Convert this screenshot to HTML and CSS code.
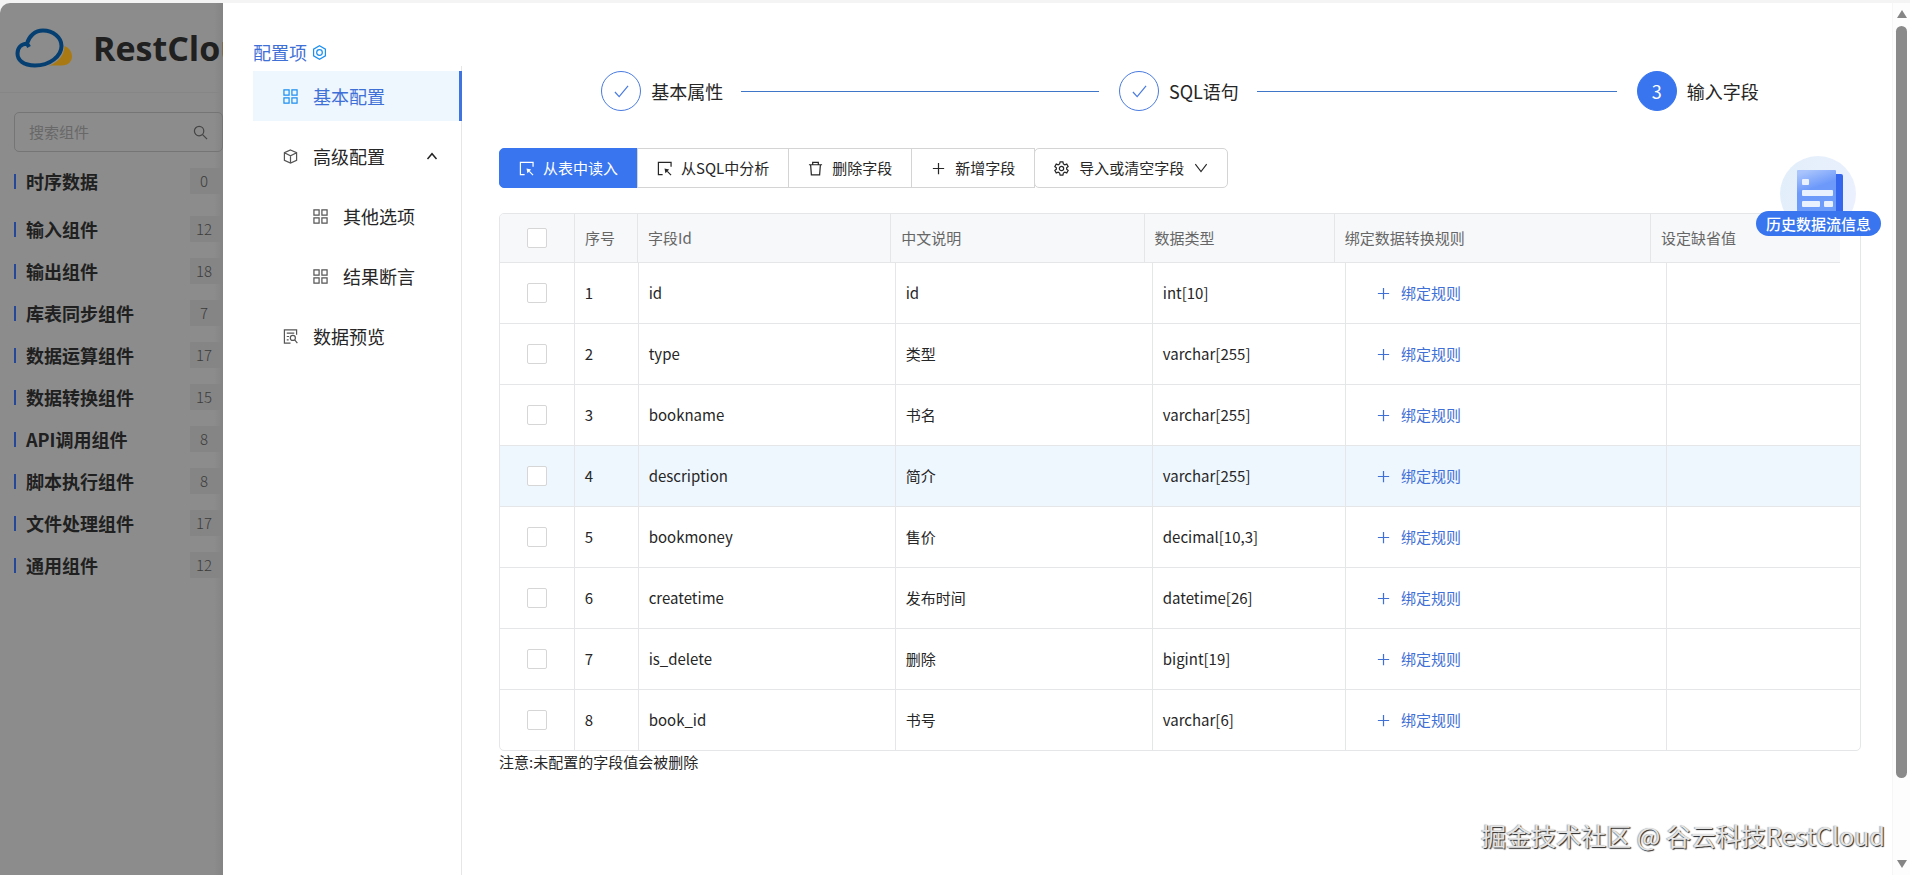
FILE: index.html
```
<!DOCTYPE html>
<html lang="zh-CN">
<head>
    <meta charset="UTF-8">
    <meta name="viewport" content="width=device-width, initial-scale=1.0">
    <title>RestCloud - 输入字段</title>
    <link rel="stylesheet" href="styles.css">
</head>
<body>

<!-- shared icons -->
<svg class="sprite" aria-hidden="true">
    <symbol id="i-grid" viewBox="0 0 16 16"><path d="M1 1h5.500v5.500H1zM9.500 1H15v5.500H9.500zM1 9.500h5.500V15H1zM9.500 9.500H15V15H9.500z"/></symbol>
    <symbol id="i-box" viewBox="0 0 16 16"><path d="M8 1l6.500 3v8L8 15l-6.500-3V4zM1.500 4L8 7.200 14.500 4M8 7.200V15"/></symbol>
    <symbol id="i-preview" viewBox="0 0 16 16"><path d="M14.500 6V1h-13v14H8M4 4.500h8M4 8h2.500M4 11.500h2"/><circle cx="10.500" cy="9.500" r="2.700"/><path d="M12.500 11.700L15.300 15"/></symbol>
    <symbol id="i-select" viewBox="0 0 16 16"><path d="M15 6V1.500H1.500v13H6M15 15l-4-4"/><path class="solid" d="M8 8l5 1-4 4z"/></symbol>
    <symbol id="i-trash" viewBox="0 0 16 16"><path d="M1 4h14M5 4V1.500h6V4M2.800 4l.8 10.800h8.800L13.200 4"/></symbol>
    <symbol id="i-plus" viewBox="0 0 16 16"><path d="M8 2v12M2 8h12"/></symbol>
    <symbol id="i-gear" viewBox="0 0 16 16"><path d="M6.500 1h3l.5 2.100 1.500.9 2.100-.7 1.500 2.600-1.600 1.400v1.400l1.600 1.400-1.500 2.600-2.100-.7-1.500.9-.5 2.100h-3L6 12.900 4.500 12l-2.100.7-1.500-2.600 1.600-1.400V7.300L.9 5.900l1.500-2.600 2.100.7L6 3.100z"/><circle cx="8" cy="8" r="2.300"/></symbol>
    <symbol id="i-check" viewBox="0 0 16 16"><path d="M1 8.500L5.500 13.500 15 2"/></symbol>
    <symbol id="i-down" viewBox="0 0 16 16"><path d="M1.500 3.500L8 12l6.500-8.500"/></symbol>
    <symbol id="i-up" viewBox="0 0 16 16"><path d="M2 12l6-7 6 7"/></symbol>
    <symbol id="i-search" viewBox="0 0 16 16"><circle cx="6.500" cy="6.500" r="5"/><path d="M10.200 10.200L15 15"/></symbol>
    <symbol id="i-nut" viewBox="0 0 16 16"><path d="M8 .8l6.300 3.600v7.200L8 15.200l-6.300-3.600V4.400z"/><circle cx="8" cy="8" r="3"/></symbol>
</svg>

<div class="app">
    <aside class="sidebar">
        <div class="brand">
            <svg class="logo" viewBox="0 0 58 40" aria-hidden="true">
                <path d="M34 37.500c6-3 11-9 13-20 6 1 10 5 10 11 0 5-4 9-10 9z" fill="#a97a14"/>
                <path d="M15 36C7 36 2 31 2 25.500 2 20 6 16 12 15.500 14 8 20 2.500 28 2.500c10 0 18.500 7 18.500 15.500C46.500 28 37 36 25 36z" fill="#8c8c8c" stroke="#8c8c8c" stroke-width="6"/>
                <path d="M14 19c-1-2-2-3-2-3.500C14 8 20 2.500 28 2.500c10 0 18.500 7 18.500 15.500C46.500 28 35 37.500 20 37.500 8 37.500 2.500 32 2.500 25.500 2.500 20 6 16 12 15.500" fill="none" stroke="#053f72" stroke-width="4"/>
            </svg>
            <span>RestCloud</span>
        </div>
        <div class="search">
            <input type="text" placeholder="搜索组件" aria-label="搜索组件">
            <svg class="icon"><use href="#i-search"/></svg>
        </div>
        <ul class="groups">
            <li><span>时序数据</span><em>0</em></li>
            <li><span>输入组件</span><em>12</em></li>
            <li><span>输出组件</span><em>18</em></li>
            <li><span>库表同步组件</span><em>7</em></li>
            <li><span>数据运算组件</span><em>17</em></li>
            <li><span>数据转换组件</span><em>15</em></li>
            <li><span>API调用组件</span><em>8</em></li>
            <li><span>脚本执行组件</span><em>8</em></li>
            <li><span>文件处理组件</span><em>17</em></li>
            <li><span>通用组件</span><em>12</em></li>
        </ul>
    </aside>

    <div class="drawer">
        <nav class="menu">
            <div class="menu-title">配置项 <svg class="icon"><use href="#i-nut"/></svg></div>
            <div class="menu-list">
                <a class="item active" href="#"><svg class="icon"><use href="#i-grid"/></svg>基本配置</a>
                <a class="item" href="#"><svg class="icon"><use href="#i-box"/></svg>高级配置<svg class="icon arrow"><use href="#i-up"/></svg></a>
                <a class="item sub" href="#"><svg class="icon"><use href="#i-grid"/></svg>其他选项</a>
                <a class="item sub" href="#"><svg class="icon"><use href="#i-grid"/></svg>结果断言</a>
                <a class="item" href="#"><svg class="icon"><use href="#i-preview"/></svg>数据预览</a>
            </div>
        </nav>

        <main class="content">
            <ol class="steps">
                <li class="step"><span class="dot"><svg class="icon"><use href="#i-check"/></svg></span><span>基本属性</span></li>
                <li class="step"><span class="dot"><svg class="icon"><use href="#i-check"/></svg></span><span>SQL语句</span></li>
                <li class="step current"><span class="dot">3</span><span>输入字段</span></li>
            </ol>

            <div class="toolbar">
                <button class="btn primary"><svg class="icon"><use href="#i-select"/></svg>从表中读入</button>
                <button class="btn"><svg class="icon"><use href="#i-select"/></svg>从SQL中分析</button>
                <button class="btn"><svg class="icon"><use href="#i-trash"/></svg>删除字段</button>
                <button class="btn"><svg class="icon"><use href="#i-plus"/></svg>新增字段</button>
                <button class="btn dropdown"><svg class="icon"><use href="#i-gear"/></svg>导入或清空字段<svg class="icon small"><use href="#i-down"/></svg></button>
            </div>

            <div class="grid">
                <table class="head">
                    <colgroup><col class="c-check"><col class="c-no"><col class="c-id"><col class="c-name"><col class="c-type"><col class="c-rule"><col></colgroup>
                    <thead>
                        <tr>
                            <th><input type="checkbox" aria-label="全选"></th>
                            <th>序号</th>
                            <th>字段Id</th>
                            <th>中文说明</th>
                            <th>数据类型</th>
                            <th>绑定数据转换规则</th>
                            <th>设定缺省值</th>
                        </tr>
                    </thead>
                </table>
                <table class="body">
                    <colgroup><col class="c-check"><col class="c-no"><col class="c-id"><col class="c-name"><col class="c-type"><col class="c-rule"><col></colgroup>
                    <tbody>
                        <tr><td><input type="checkbox" aria-label="id"></td><td>1</td><td>id</td><td>id</td><td>int[10]</td><td><button class="link"><svg class="icon"><use href="#i-plus"/></svg>绑定规则</button></td><td></td></tr>
                        <tr><td><input type="checkbox" aria-label="type"></td><td>2</td><td>type</td><td>类型</td><td>varchar[255]</td><td><button class="link"><svg class="icon"><use href="#i-plus"/></svg>绑定规则</button></td><td></td></tr>
                        <tr><td><input type="checkbox" aria-label="bookname"></td><td>3</td><td>bookname</td><td>书名</td><td>varchar[255]</td><td><button class="link"><svg class="icon"><use href="#i-plus"/></svg>绑定规则</button></td><td></td></tr>
                        <tr class="hover"><td><input type="checkbox" aria-label="description"></td><td>4</td><td>description</td><td>简介</td><td>varchar[255]</td><td><button class="link"><svg class="icon"><use href="#i-plus"/></svg>绑定规则</button></td><td></td></tr>
                        <tr><td><input type="checkbox" aria-label="bookmoney"></td><td>5</td><td>bookmoney</td><td>售价</td><td>decimal[10,3]</td><td><button class="link"><svg class="icon"><use href="#i-plus"/></svg>绑定规则</button></td><td></td></tr>
                        <tr><td><input type="checkbox" aria-label="createtime"></td><td>6</td><td>createtime</td><td>发布时间</td><td>datetime[26]</td><td><button class="link"><svg class="icon"><use href="#i-plus"/></svg>绑定规则</button></td><td></td></tr>
                        <tr><td><input type="checkbox" aria-label="is_delete"></td><td>7</td><td>is_delete</td><td>删除</td><td>bigint[19]</td><td><button class="link"><svg class="icon"><use href="#i-plus"/></svg>绑定规则</button></td><td></td></tr>
                        <tr><td><input type="checkbox" aria-label="book_id"></td><td>8</td><td>book_id</td><td>书号</td><td>varchar[6]</td><td><button class="link"><svg class="icon"><use href="#i-plus"/></svg>绑定规则</button></td><td></td></tr>
                    </tbody>
                </table>
            </div>
            <p class="note">注意:未配置的字段值会被删除</p>
        </main>

        <div class="scrollbar" aria-hidden="true">
            <svg viewBox="0 0 10 8"><path d="M5 0l5 8H0z"/></svg>
            <div class="track"><div class="thumb"></div></div>
            <svg viewBox="0 0 10 8"><path d="M0 0h10L5 8z"/></svg>
        </div>
    </div>
</div>

<button class="history">
    <svg viewBox="0 0 76 60" aria-hidden="true">
        <defs>
            <linearGradient id="halo" x1="0" y1="0" x2="1" y2="0.300"><stop offset="0" stop-color="#e2eefb"/><stop offset="1" stop-color="#eaf0fd"/></linearGradient>
            <linearGradient id="page" x1="0.300" y1="0" x2="0.600" y2="1"><stop offset="0" stop-color="#a9c4fc"/><stop offset="0.400" stop-color="#6c99fa"/><stop offset="1" stop-color="#6f9efa"/></linearGradient>
        </defs>
        <circle cx="38" cy="38" r="38" fill="url(#halo)"/>
        <rect x="50" y="18" width="13" height="42" rx="2" fill="#3467ee"/>
        <rect x="17" y="14" width="39" height="46" rx="1" fill="url(#page)"/>
        <g fill="#e9f1ff">
            <rect x="22" y="23" width="7" height="6" rx="1"/>
            <rect x="22" y="34" width="31" height="6" rx="1"/>
            <rect x="22" y="45" width="18" height="6" rx="1"/>
            <rect x="44" y="45" width="9" height="6" rx="1"/>
        </g>
    </svg>
    <span>历史数据流信息</span>
</button>

<div class="watermark">掘金技术社区 @ 谷云科技RestCloud</div>

</body>
</html>
```
FILE: styles.css
```
* {
    box-sizing: border-box;
}
body {
    margin: 0;
    height: 100vh;
    padding-top: 3px;
    overflow: hidden;
    background: #f4f4f4;
    color: #262626;
    font-family: "Noto Sans CJK SC", sans-serif;
    font-size: 15px;
    line-height: 22px;
}
button, input {
    font: inherit;
    color: inherit;
}
ul, ol {
    list-style: none;
    margin: 0;
    padding: 0;
}
a {
    color: inherit;
    text-decoration: none;
}
.sprite {
    display: none;
}
.icon {
    width: 15px;
    height: 15px;
    flex: none;
    fill: none;
    stroke: currentColor;
    stroke-width: 1.3;
}
.icon.small {
    width: 14px;
    height: 14px;
}
.solid {
    fill: currentColor;
    stroke: none;
}
.app {
    display: flex;
    height: 100%;
}

/* masked page behind the drawer */
.sidebar {
    width: 223px;
    flex: none;
    overflow: hidden;
    border-radius: 10px 0 0 0;
    background: linear-gradient(to right, #8c8c8c 96%, #848484);
    color: #202020;
}
.brand {
    display: flex;
    align-items: center;
    gap: 20px;
    height: 90px;
    padding-left: 15px;
    border-bottom: 1px solid #868686;
    font-family: "Open Sans", sans-serif;
    font-size: 34px;
    font-weight: 700;
}
.logo {
    width: 58px;
    height: 40px;
    flex: none;
}
.search {
    display: flex;
    align-items: center;
    height: 40px;
    margin: 19px 0 0 14px;
    padding: 0 14px;
    border: 1px solid #757575;
    border-radius: 5px;
    color: #454545;
}
.search input {
    flex: 1;
    min-width: 0;
    padding: 0;
    border: 0;
    outline: 0;
    background: none;
}
.search input::placeholder {
    color: #686868;
}
.groups {
    padding: 8px 0 0 14px;
}
.groups li {
    display: flex;
    align-items: center;
    justify-content: space-between;
    height: 42px;
    font-size: 18px;
    font-weight: 700;
}
.groups li:first-child {
    margin-bottom: 6px;
}
.groups span {
    display: flex;
    align-items: center;
    gap: 10px;
}
.groups span::before {
    content: "";
    width: 2px;
    height: 15px;
    background: #24479a;
}
.groups em {
    width: 33px;
    padding-right: 5px;
    background: #858585;
    color: #3c3c3c;
    font-size: 15px;
    font-style: normal;
    font-weight: 300;
    line-height: 26px;
    text-align: center;
}

.drawer {
    display: flex;
    flex: 1;
    min-width: 0;
    padding-left: 30px;
    background: #fff;
}
.menu {
    display: flex;
    flex-direction: column;
    width: 209px;
    flex: none;
    padding-top: 36px;
    font-size: 18px;
}
.menu-title {
    display: flex;
    align-items: center;
    gap: 5px;
    line-height: 27px;
    color: #3f70d6;
}
.menu-title .icon {
    color: #1c8ff0;
}
.menu-list {
    display: flex;
    flex-direction: column;
    gap: 10px;
    flex: 1;
    padding-top: 5px;
    border-right: 1px solid #e6e6e6;
}
.item {
    display: flex;
    align-items: center;
    gap: 15px;
    height: 50px;
    padding: 0 23px 0 30px;
}
.item .icon {
    color: #555;
}
.item .arrow {
    width: 12px;
    height: 12px;
    margin-left: auto;
    color: #222;
    stroke-width: 2;
}
.item.sub {
    padding-left: 60px;
}
.item.active {
    margin-right: -1px;
    border-right: 3px solid #3f73df;
    background: #eef6fe;
    color: #3f70d6;
}
.item.active .icon {
    color: #1c8ff0;
}

.content {
    flex: 1;
    min-width: 0;
    padding: 68px 31px 0 37px;
}
.steps {
    display: flex;
    gap: 20px;
    width: 85%;
    margin: 0 auto 37px;
    font-size: 18px;
}
.step {
    display: flex;
    align-items: center;
    gap: 10px;
    flex: 1;
}
.step::after {
    content: "";
    flex: 1;
    height: 1px;
    margin-left: 8px;
    background: #3f76c8;
}
.current {
    flex: none;
}
.current::after {
    display: none;
}
.dot {
    display: flex;
    align-items: center;
    justify-content: center;
    width: 40px;
    height: 40px;
    border: 1px solid #4a7be0;
    border-radius: 50%;
    color: #4a7be0;
}
.current .dot {
    background: #3875ee;
    border-color: #3875ee;
    color: #fff;
}

.toolbar {
    display: flex;
}
.btn {
    display: flex;
    align-items: center;
    gap: 9px;
    height: 40px;
    margin-right: -1px;
    padding: 0 19px;
    border: 1px solid #d4d4d4;
    background: #fff;
}
.primary {
    border-color: #3875ee;
    border-radius: 5px 0 0 5px;
    background: #3875ee;
    color: #fff;
}
.dropdown {
    gap: 10px;
    border-radius: 5px;
}

.grid {
    margin-top: 25px;
    border: 1px solid #e5e6e8;
    border-radius: 5px;
    overflow: hidden;
}
table {
    width: 100%;
    table-layout: fixed;
    border-collapse: separate;
    border-spacing: 0;
}
.head {
    width: calc(100% - 20px);
    background: #f6f8fa;
}
.c-check {
    width: 5.5%;
}
.head .c-check {
    width: 5.6%;
}
.c-no {
    width: 4.7%;
}
.c-id, .c-name {
    width: 18.9%;
}
.c-type {
    width: 14.2%;
}
.c-rule {
    width: 23.6%;
}
th, td {
    height: 61px;
    padding: 0 10px;
    border-right: 1px solid #e5e6e8;
    border-bottom: 1px solid #e5e6e8;
    text-align: left;
}
th {
    height: 49px;
    color: #666;
    font-weight: 400;
}
th:first-child, td:first-child {
    padding: 0;
    text-align: center;
}
th:last-child, td:last-child {
    border-right: 0;
}
tr:last-child td {
    height: 60px;
    border-bottom: 0;
}
.hover {
    background: #eef6fe;
}
input[type="checkbox"] {
    appearance: none;
    display: block;
    width: 20px;
    height: 20px;
    margin: 0 auto;
    border: 1px solid #d6d6d6;
    border-radius: 2px;
    background: #fff;
}
.link {
    display: flex;
    align-items: center;
    gap: 10px;
    padding: 0 20px;
    border: 0;
    background: none;
    color: #3f70d6;
}
.note {
    margin: 0;
}

.scrollbar {
    display: flex;
    flex-direction: column;
    align-items: center;
    gap: 8px;
    width: 18px;
    flex: none;
    padding: 7px 0;
    border-left: 1px solid #f6f6f6;
    background: #fdfdfd;
}
.scrollbar svg {
    width: 10px;
    height: 8px;
    fill: #858585;
}
.track {
    flex: 1;
}
.thumb {
    width: 11px;
    height: 91%;
    border-radius: 6px;
    background: #8a8a8a;
}

/* floating entry and site mark */
.history {
    position: absolute;
    top: 156px;
    right: 29px;
    display: flex;
    flex-direction: column;
    align-items: center;
    padding: 0;
    border: 0;
    background: none;
    color: #fff;
}
.history svg {
    width: 76px;
    height: 60px;
    margin-bottom: -5px;
}
.history span {
    position: relative;
    padding: 0 10px;
    border-radius: 13px;
    background: #3875ee;
    font-weight: 500;
    line-height: 25px;
}
.watermark {
    position: absolute;
    right: 25px;
    bottom: 22px;
    color: #e4e4e4;
    font-size: 25px;
    line-height: 36px;
    text-shadow: 1px 1px 1px #222, -1px 0 1px #aaa;
}
```
